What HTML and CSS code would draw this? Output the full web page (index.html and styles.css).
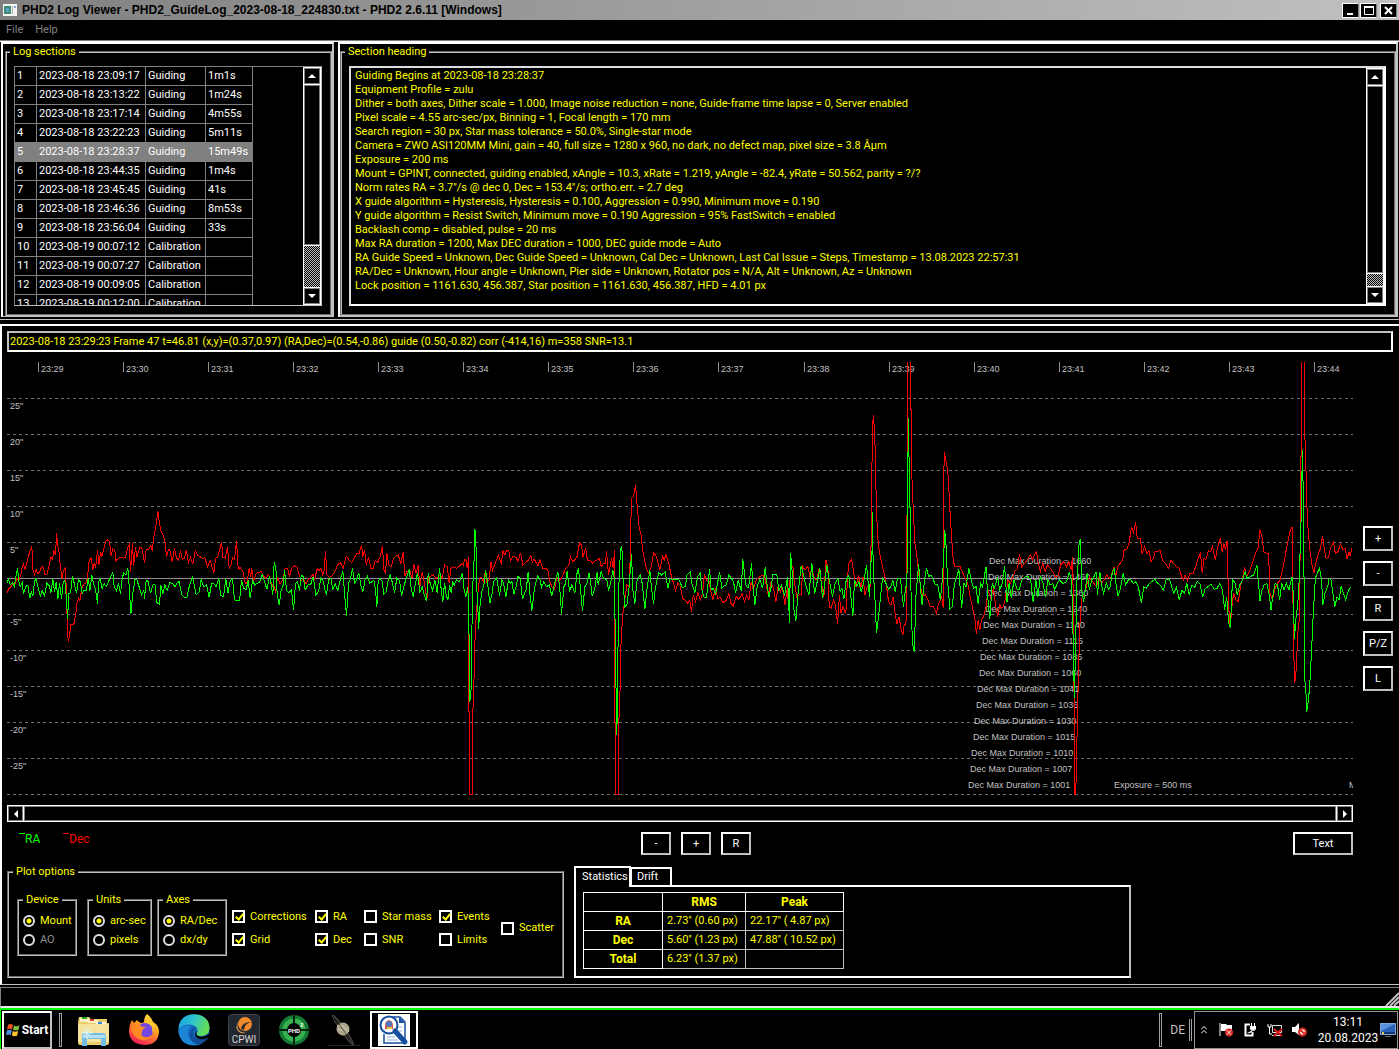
FILE: index.html
```html
<!DOCTYPE html>
<html lang="en">
<head>
<meta charset="utf-8">
<title>PHD2 Log Viewer</title>
<link rel="stylesheet" href="styles.css">
</head>
<body>
<header class="titlebar">
  <svg class="app-icon" width="14" height="12" viewBox="0 0 14 12"><rect width="14" height="12" fill="#f4f4f4"/><rect x="1" y="2" width="7" height="8" fill="#3c8c78"/><rect x="3" y="4" width="3" height="4" fill="#5aa0c8"/><rect x="9" y="2" width="1" height="8" fill="#b0b0b0"/><rect x="11" y="2" width="2" height="2" fill="#88a8d0"/></svg>
  <h1>PHD2 Log Viewer - PHD2_GuideLog_2023-08-18_224830.txt - PHD2 2.6.11 [Windows]</h1>
  <div class="window-buttons">
    <button aria-label="Minimize"><svg width="12" height="11"><rect x="2" y="8" width="6" height="2" fill="#fff"/></svg></button>
    <button aria-label="Maximize"><svg width="12" height="11"><path d="M1.500 2V9.500H10.500V2" fill="none" stroke="#fff"/><rect x="1" y="1" width="10" height="2" fill="#fff"/></svg></button>
    <button class="close" aria-label="Close"><svg width="12" height="11"><path d="M2 2L9 9M9 2L2 9" stroke="#fff" stroke-width="2"/></svg></button>
  </div>
</header>
<nav class="menubar"><button>File</button><button>Help</button></nav>

<section class="panes">
  <div class="pane pane-log">
    <fieldset class="group">
      <legend>Log sections</legend>
      <div class="listbox">
        <table class="log">
          <tbody>
            <tr><td>1</td><td>2023-08-18 23:09:17</td><td>Guiding</td><td>1m1s</td></tr>
            <tr><td>2</td><td>2023-08-18 23:13:22</td><td>Guiding</td><td>1m24s</td></tr>
            <tr><td>3</td><td>2023-08-18 23:17:14</td><td>Guiding</td><td>4m55s</td></tr>
            <tr><td>4</td><td>2023-08-18 23:22:23</td><td>Guiding</td><td>5m11s</td></tr>
            <tr class="selected"><td>5</td><td>2023-08-18 23:28:37</td><td>Guiding</td><td>15m49s</td></tr>
            <tr><td>6</td><td>2023-08-18 23:44:35</td><td>Guiding</td><td>1m4s</td></tr>
            <tr><td>7</td><td>2023-08-18 23:45:45</td><td>Guiding</td><td>41s</td></tr>
            <tr><td>8</td><td>2023-08-18 23:46:36</td><td>Guiding</td><td>8m53s</td></tr>
            <tr><td>9</td><td>2023-08-18 23:56:04</td><td>Guiding</td><td>33s</td></tr>
            <tr><td>10</td><td>2023-08-19 00:07:12</td><td>Calibration</td><td></td></tr>
            <tr><td>11</td><td>2023-08-19 00:07:27</td><td>Calibration</td><td></td></tr>
            <tr><td>12</td><td>2023-08-19 00:09:05</td><td>Calibration</td><td></td></tr>
            <tr><td>13</td><td>2023-08-19 00:12:00</td><td>Calibration</td><td></td></tr>
          </tbody>
        </table>
        <div class="vscroll">
          <button aria-label="Scroll up"><svg width="8" height="4"><path d="M0 4L4 0L8 4Z" fill="#fff"/></svg></button>
          <div class="thumb thumb-log"></div><div class="track"></div>
          <button aria-label="Scroll down"><svg width="8" height="4"><path d="M0 0L4 4L8 0Z" fill="#fff"/></svg></button>
        </div>
      </div>
    </fieldset>
  </div>
  <div class="pane pane-heading">
    <fieldset class="group">
      <legend>Section heading</legend>
      <div class="textbox">
        <textarea readonly aria-label="Section heading">Guiding Begins at 2023-08-18 23:28:37
Equipment Profile = zulu
Dither = both axes, Dither scale = 1.000, Image noise reduction = none, Guide-frame time lapse = 0, Server enabled
Pixel scale = 4.55 arc-sec/px, Binning = 1, Focal length = 170 mm
Search region = 30 px, Star mass tolerance = 50.0%, Single-star mode
Camera = ZWO ASI120MM Mini, gain = 40, full size = 1280 x 960, no dark, no defect map, pixel size = 3.8 Âµm
Exposure = 200 ms
Mount = GPINT, connected, guiding enabled, xAngle = 10.3, xRate = 1.219, yAngle = -82.4, yRate = 50.562, parity = ?/?
Norm rates RA = 3.7"/s @ dec 0, Dec = 153.4"/s; ortho.err. = 2.7 deg
X guide algorithm = Hysteresis, Hysteresis = 0.100, Aggression = 0.990, Minimum move = 0.190
Y guide algorithm = Resist Switch, Minimum move = 0.190 Aggression = 95% FastSwitch = enabled
Backlash comp = disabled, pulse = 20 ms
Max RA duration = 1200, Max DEC duration = 1000, DEC guide mode = Auto
RA Guide Speed = Unknown, Dec Guide Speed = Unknown, Cal Dec = Unknown, Last Cal Issue = Steps, Timestamp = 13.08.2023 22:57:31
RA/Dec = Unknown, Hour angle = Unknown, Pier side = Unknown, Rotator pos = N/A, Alt = Unknown, Az = Unknown
Lock position = 1161.630, 456.387, Star position = 1161.630, 456.387, HFD = 4.01 px</textarea>
        <div class="vscroll">
          <button aria-label="Scroll up"><svg width="8" height="4"><path d="M0 4L4 0L8 4Z" fill="#fff"/></svg></button>
          <div class="thumb thumb-heading"></div><div class="track"></div>
          <button aria-label="Scroll down"><svg width="8" height="4"><path d="M0 0L4 4L8 0Z" fill="#fff"/></svg></button>
        </div>
      </div>
    </fieldset>
  </div>
</section>

<main class="main">
  <input class="info" readonly aria-label="Frame information" value="2023-08-18 23:29:23 Frame 47 t=46.81 (x,y)=(0.37,0.97) (RA,Dec)=(0.54,-0.86) guide (0.50,-0.82) corr (-414,16) m=358 SNR=13.1">
  <div class="plot-area">
    <div class="plot-column">
      <svg class="chart" viewBox="7 362 1346 433">
        <path class="grid" d="M7 398.500H1353M7 434.500H1353M7 470.500H1353M7 506.500H1353M7 542.500H1353M7 614.500H1353M7 650.500H1353M7 686.500H1353M7 722.500H1353M7 758.500H1353M7 794.500H1353"/>
        <path class="axis" d="M7 578.500H1353"/>
        <path class="axis" d="M38.500 362V372M123.500 362V372M208.500 362V372M293.500 362V372M378.500 362V372M463.500 362V372M548.500 362V372M633.500 362V372M718.500 362V372M804.500 362V372M889.500 362V372M974.500 362V372M1059.500 362V372M1144.500 362V372M1229.500 362V372M1314.500 362V372"/>
        <g class="labels">
          <text x="41" y="372">23:29</text><text x="126" y="372">23:30</text><text x="211" y="372">23:31</text><text x="296" y="372">23:32</text><text x="381" y="372">23:33</text><text x="466" y="372">23:34</text><text x="551" y="372">23:35</text><text x="636" y="372">23:36</text><text x="721" y="372">23:37</text><text x="807" y="372">23:38</text><text x="892" y="372">23:39</text><text x="977" y="372">23:40</text><text x="1062" y="372">23:41</text><text x="1147" y="372">23:42</text><text x="1232" y="372">23:43</text><text x="1317" y="372">23:44</text>
          <text x="10" y="409">25"</text><text x="10" y="445">20"</text><text x="10" y="481">15"</text><text x="10" y="517">10"</text><text x="10" y="553">5"</text><text x="10" y="625">-5"</text><text x="10" y="661">-10"</text><text x="10" y="697">-15"</text><text x="10" y="733">-20"</text><text x="10" y="769">-25"</text>
          <text x="989" y="564">Dec Max Duration = 1660</text><text x="988" y="580">Dec Max Duration = 1460</text><text x="986" y="596">Dec Max Duration = 1360</text><text x="985" y="612">Dec Max Duration = 1240</text><text x="983" y="628">Dec Max Duration = 1140</text><text x="982" y="644">Dec Max Duration = 1115</text><text x="980" y="660">Dec Max Duration = 1085</text><text x="979" y="676">Dec Max Duration = 1060</text><text x="977" y="692">Dec Max Duration = 1041</text><text x="976" y="708">Dec Max Duration = 1035</text><text x="974" y="724">Dec Max Duration = 1030</text><text x="973" y="740">Dec Max Duration = 1015</text><text x="971" y="756">Dec Max Duration = 1010</text><text x="970" y="772">Dec Max Duration = 1007</text><text x="968" y="788">Dec Max Duration = 1001</text><text x="1114" y="788">Exposure = 500 ms</text><text x="1349" y="788">M</text>
        </g>
        <g class="traces" transform="translate(.2 320) scale(.33333)">
          <polyline class="dec" points="20,818 26,806 32,800 38,790 44,793 50,775 56,782 62,765 66,740 70,733 75,748 82,718 90,692 95,680 98,750 103,763 108,750 113,762 118,755 125,740 130,742 134,765 140,765 147,735 152,712 157,718 161,693 166,705 169,640 172,672 177,700 181,745 186,778 189,755 195,745 198,800 201,900 204,965 208,945 212,915 217,915 222,910 227,880 231,845 235,835 239,842 245,805 250,793 257,790 262,770 267,720 273,715 278,750 282,730 286,745 292,690 296,735 301,695 305,708 310,690 316,665 322,660 328,664 333,708 338,686 344,692 347,722 355,715 362,712 370,715 376,712 382,685 387,675 391,755 397,668 400,738 406,682 410,712 418,684 425,684 433,728 438,690 446,688 452,675 456,692 461,650 467,620 473,573 477,605 482,632 488,645 494,660 499,710 504,690 509,690 516,725 523,685 528,712 535,722 541,690 546,718 553,715 558,690 565,727 571,712 578,733 585,692 592,706 600,710 607,716 614,713 622,740 630,722 636,742 641,760 646,715 652,712 658,692 664,665 668,712 675,714 682,680 687,745 693,735 697,712 703,718 709,662 714,748 720,742 728,755 735,790 740,790 747,744 751,770 755,745 760,785 768,760 775,758 783,755 790,768 797,775 805,765 812,785 818,800 822,800 826,818 832,770 840,792 848,780 855,745 862,745 868,770 874,745 883,738 890,740 897,765 903,782 910,778 917,792 924,778 932,772 938,762 943,780 951,745 956,752 962,745 968,765 972,750 976,693 980,765 988,772 995,768 1004,755 1012,735 1021,727 1029,745 1038,708 1047,720 1055,728 1063,712 1070,700 1077,700 1084,675 1088,710 1093,690 1098,735 1105,712 1112,745 1119,745 1125,720 1132,728 1140,710 1147,678 1151,750 1156,760 1160,700 1166,735 1173,740 1180,715 1187,708 1194,705 1202,730 1209,695 1214,768 1220,755 1228,750 1236,775 1241,732 1248,760 1254,735 1259,800 1266,755 1273,790 1280,840 1285,770 1293,768 1300,765 1307,775 1314,772 1319,765 1326,775 1333,735 1341,740 1347,790 1352,745 1360,740 1368,745 1376,740 1384,732 1390,735 1393,718 1398,722 1401,745 1405,712"/>
          <polyline class="ra" points="20,790 25,778 30,795 36,788 42,800 48,765 52,745 56,785 60,800 66,788 70,822 76,800 83,795 89,835 93,815 98,828 103,785 107,775 113,800 120,828 126,812 133,828 140,790 146,795 152,818 158,778 163,815 168,785 173,838 178,788 184,838 189,785 194,780 199,840 202,898 206,820 211,818 217,768 222,790 229,820 235,780 240,785 246,820 252,810 258,812 264,775 269,812 275,765 280,790 286,810 292,852 295,785 300,778 306,805 312,790 318,800 325,785 331,770 338,757 342,800 349,812 355,790 361,822 366,775 371,758 377,765 383,745 387,800 392,882 398,820 404,780 410,780 416,798 424,825 431,810 433,836 438,780 444,785 451,820 458,795 464,792 470,848 478,852 482,795 488,822 494,795 501,812 509,788 517,790 524,800 531,788 537,785 545,825 552,832 560,832 567,800 577,768 583,800 588,825 597,815 603,778 610,800 619,795 627,832 634,790 640,790 648,800 656,775 661,825 670,830 677,776 683,820 690,782 697,778 703,840 711,842 718,842 724,780 730,805 738,808 744,780 750,835 757,778 763,795 770,790 778,788 786,765 793,785 800,808 808,768 814,800 818,825 822,725 827,745 831,825 837,855 843,810 849,795 853,750 859,812 866,818 874,810 880,870 886,790 892,785 898,812 903,765 909,770 915,810 923,795 931,795 939,770 947,825 955,815 962,775 968,780 974,808 979,825 985,780 992,775 998,808 1005,792 1013,812 1020,780 1028,752 1033,820 1039,888 1045,790 1051,775 1057,745 1063,790 1069,780 1076,758 1083,800 1088,815 1095,778 1102,768 1108,790 1115,785 1121,782 1126,808 1130,862 1134,782 1140,775 1146,785 1151,822 1158,815 1163,785 1170,765 1177,790 1183,818 1190,775 1198,782 1204,828 1211,800 1218,775 1227,748 1233,805 1239,830 1246,790 1252,758 1259,818 1266,800 1272,825 1279,843 1284,760 1290,790 1297,812 1304,780 1311,818 1318,745 1321,775"/>
        </g>
        <g class="traces" transform="translate(440.2 350) scale(.33333)">
          <polyline class="dec" points="85,622 85,1085 88,1085 88,1333 97,1333 97,1115 101,1005 104,880 108,800 113,730 118,685 124,682 130,695 135,665 140,697 147,690 152,635 157,662 165,640 175,615 184,645 187,602 194,615 198,603 206,602 211,632 218,620 228,622 233,635 241,608 248,645 256,637 264,632 272,617 276,637 282,627 293,648 299,630 308,655 316,655 323,660 329,695 335,710 343,718 350,680 358,690 367,680 376,655 386,645 391,620 398,635 410,622 418,578 424,585 428,622 436,595 442,632 450,630 457,640 466,632 478,625 483,650 490,640 496,640 499,602 505,675 514,625 519,655 523,600 523,1118 526,1118 526,1333 535,1333 536,1115 540,1010 542,890 547,800 555,740 560,705 568,710 572,510 575,445 580,440 586,405 592,480 597,535 602,550 607,598 612,625 618,655 625,670 632,655 640,608 646,615 652,632 659,660 667,620 672,630 677,615 686,640 692,672 700,700 706,722 713,698 720,710 728,745 736,752 742,760 749,752 754,787 759,735 766,755 773,728 780,750 787,730 793,672 799,692 806,690 811,722 818,747 826,715 833,745 840,742 848,757 858,752 866,730 872,760 879,768 888,740 896,748 906,732 913,755 919,735 926,750 933,695 939,720 948,690 956,682 968,675 975,690 985,738 992,698 1000,715 1007,755 1014,708 1021,725 1026,710 1034,765 1041,715 1045,765 1052,645 1058,650 1063,700 1070,740 1076,735 1083,735 1088,650 1094,660 1103,650 1108,675 1115,655 1122,685 1130,690 1137,655 1144,700 1151,742 1157,630 1163,650 1167,770 1173,775 1180,750 1186,765 1192,822 1198,735 1202,790 1208,770 1217,790 1222,680 1226,640 1234,627 1240,665 1247,710 1255,675 1262,712 1269,680 1274,735 1281,710 1290,710 1292,590 1295,590 1295,357 1298,215 1300,195 1304,265 1309,490 1314,580 1320,620 1327,650 1334,680 1340,715 1345,755 1352,765 1359,740 1365,795 1370,822 1377,800 1382,835 1388,855 1392,825 1396,825 1399,800 1399,495"/>
          <polyline class="ra" points="0,680 3,720 8,755 13,698 18,735 23,750 28,705 33,728 38,695 42,705 49,690 58,695 67,668 71,715 77,740 83,710 87,875 89,1055 94,1005 95,860 97,700 100,685 104,538 107,560 109,700 113,770 115,838 120,760 125,725 131,705 136,660 141,690 149,760 156,730 160,695 169,683 174,710 178,737 185,690 190,698 197,740 205,690 210,700 215,695 221,732 228,710 233,680 240,685 247,748 253,730 258,720 264,665 269,730 275,782 281,730 286,700 293,678 300,690 304,712 311,695 318,710 327,705 335,738 343,700 353,665 359,720 364,792 371,710 376,700 381,662 388,725 395,705 404,730 410,672 415,655 421,720 427,783 434,710 440,700 447,668 452,705 456,738 464,715 471,665 474,705 483,665 490,685 500,690 505,722 511,700 518,660 523,690 526,935 530,1155 533,940 535,730 541,595 545,590 549,700 554,770 560,765 566,720 571,650 574,612 578,720 584,762 590,695 600,675 606,700 614,778 620,720 629,660 634,715 640,762 646,710 656,668 664,675 675,665 683,715 690,685 698,690 707,690 716,688 726,712 736,710 740,675 750,665 756,705 764,728 772,680 780,670 786,725 792,742 799,742 808,658 813,720 820,715 826,735 832,700 838,665 845,715 852,708 858,705 866,675 873,685 880,695 886,730 894,690 903,722 908,628 914,680 918,710 925,712 934,640 938,700 944,765 951,710 959,688 967,715 975,652 980,700 986,742 993,710 998,675 1010,675 1016,720 1024,705 1033,738 1042,680 1048,818 1051,610 1055,650 1060,770 1067,812 1073,735 1083,648 1090,675 1095,700 1106,735 1115,640 1123,732 1130,700 1139,655 1147,745 1152,715 1160,645 1166,685 1177,740 1185,700 1193,685 1200,725 1205,715 1211,748 1218,690 1226,675 1232,740 1238,798 1243,690 1250,710 1256,695 1263,725 1270,700 1279,645 1284,700 1288,742 1292,635 1295,635 1297,485 1299,660 1304,740 1309,850 1315,800 1321,740 1327,685 1335,695 1345,718 1352,710 1358,690 1365,725 1372,685 1381,685 1385,730 1390,770 1396,715 1400,700 1402,560"/>
        </g>
        <g class="traces" transform="translate(860.2 350) scale(.34377 .33333)">
          <polyline class="dec" points="135,495 138,495 138,36 147,36 147,180 149,180 150,370 154,470 159,580 164,610 170,670 176,715 182,738 190,735 197,750 204,770 213,770 222,790 227,765 231,755 237,740 242,775 244,305 247,320 252,345 256,380 261,480 266,565 271,635 276,650 283,650 290,648 298,668 305,685 313,700 320,740 327,775 333,800 338,852 343,810 348,840 353,810 359,800 366,770 372,720 380,745 388,715 394,770 400,800 406,765 411,775 417,770 422,745 430,690 437,700 444,680 451,662 458,655 463,612 470,650 478,640 486,630 495,615 502,630 507,615 513,605 518,640 524,665 531,640 538,665 545,645 553,655 560,665 567,680 575,680 583,645 592,635 600,650 607,635 614,660 617,622 619,700 621,870 624,1333 627,1333 629,1245 632,1100 635,960 640,800 645,745 652,735 660,700 667,680 672,690 680,700 687,710 694,685 702,700 709,690 717,675 724,685 730,680 738,650 743,680 749,650 756,640 763,630 768,598 775,600 782,580 789,530 795,548 801,515 806,565 815,565 820,612 827,590 834,612 840,602 846,635 853,625 858,605 866,605 872,600 880,632 888,640 897,655 904,630 911,640 920,650 928,655 935,680 940,690 945,675 952,692 959,670 968,672 976,650 983,625 990,610 995,670 1000,625 1006,628 1013,602 1020,605 1025,590 1033,630 1039,595 1047,565 1053,605 1058,580 1063,600 1067,572 1070,690 1073,790 1076,835 1083,750 1087,730 1093,750 1100,755 1107,705 1112,690 1118,650 1123,680 1132,665 1140,640 1150,610 1157,595 1163,540 1168,555 1174,605 1182,610 1188,610 1192,730 1199,748 1206,720 1213,700 1222,690 1229,655 1236,620 1243,580 1250,545 1257,530 1260,870 1264,1000 1268,960 1273,850 1278,800 1282,320 1285,320 1285,36 1291,36 1292,250 1295,280 1299,460 1303,540 1308,600 1314,645 1320,670 1325,640 1333,610 1339,595 1345,558 1349,590 1355,625 1362,622 1368,595 1377,575 1382,610 1390,605 1397,582 1404,598 1411,595 1416,628 1422,605 1425,618 1430,595"/>
          <polyline class="ra" points="138,560 138,440 140,205 142,320 144,475 146,470 147,685 150,830 154,895 158,905 161,750 166,690 170,643 175,710 180,765 187,690 193,655 199,680 206,675 213,690 219,705 226,705 233,750 239,690 243,612 246,540 250,590 254,690 261,778 268,770 274,700 280,685 287,658 295,775 302,700 308,710 316,655 323,690 330,715 337,710 343,762 350,700 356,710 366,650 371,740 377,808 384,700 390,715 400,685 406,720 413,700 420,648 427,755 433,700 440,745 447,690 457,720 463,720 470,690 480,680 487,678 496,690 503,755 511,690 517,740 524,680 532,700 539,742 546,690 553,705 560,700 566,720 573,700 580,690 590,700 600,695 608,668 615,690 618,800 623,1045 627,870 630,700 634,640 637,575 641,570 644,720 650,755 655,720 660,670 667,720 673,690 680,680 686,665 690,735 697,665 702,705 708,730 716,700 722,718 727,710 733,670 739,655 744,700 750,738 757,715 765,670 772,705 780,690 787,690 795,700 802,695 809,710 818,760 825,710 832,715 840,702 848,695 857,688 865,700 873,705 882,720 890,688 900,688 906,710 912,730 920,712 928,750 936,720 943,730 950,700 957,735 965,705 973,712 980,695 988,700 996,742 1004,715 1012,710 1020,702 1030,718 1038,715 1046,700 1054,720 1060,780 1066,740 1072,820 1077,835 1079,780 1083,690 1090,698 1097,735 1104,705 1112,690 1120,665 1125,685 1135,680 1144,675 1150,660 1154,645 1159,705 1163,752 1169,720 1175,705 1183,700 1190,735 1195,780 1200,740 1207,700 1214,705 1220,750 1226,700 1233,720 1240,700 1247,720 1256,680 1260,735 1263,868 1268,800 1273,760 1277,690 1284,460 1286,300 1288,380 1291,680 1293,990 1296,1010 1299,1085 1304,1050 1308,1000 1313,900 1318,790 1324,685 1330,668 1336,655 1342,690 1346,765 1352,730 1360,710 1364,685 1370,690 1375,730 1381,770 1387,740 1393,750 1399,708 1406,730 1412,750 1420,722 1427,710"/>
        </g>
      </svg>
      <div class="hscroll">
        <button aria-label="Scroll left"><svg width="4" height="8"><path d="M4 0L0 4L4 8Z" fill="#fff"/></svg></button>
        <div class="hthumb"></div>
        <button aria-label="Scroll right"><svg width="4" height="8"><path d="M0 0L4 4L0 8Z" fill="#fff"/></svg></button>
      </div>
      <div class="controls">
        <div class="keys">
          <span class="key key-ra"><i></i>RA</span>
          <span class="key key-dec"><i></i>Dec</span>
        </div>
        <div class="zoom"><button class="btn">-</button><button class="btn">+</button><button class="btn">R</button></div>
        <button class="btn">Text</button>
      </div>
    </div>
    <div class="side"><button class="btn">+</button><button class="btn">-</button><button class="btn">R</button><button class="btn">P/Z</button><button class="btn">L</button></div>
  </div>

  <div class="bottom">
    <fieldset class="group options">
      <legend>Plot options</legend>
      <div class="options-row">
        <fieldset class="group radios device"><legend>Device</legend>
          <label><input type="radio" name="device" checked>Mount</label>
          <label class="off"><input type="radio" name="device" disabled>AO</label>
        </fieldset>
        <fieldset class="group radios units"><legend>Units</legend>
          <label><input type="radio" name="units" checked>arc-sec</label>
          <label><input type="radio" name="units">pixels</label>
        </fieldset>
        <fieldset class="group radios axes"><legend>Axes</legend>
          <label><input type="radio" name="axes" checked>RA/Dec</label>
          <label><input type="radio" name="axes">dx/dy</label>
        </fieldset>
        <div class="checks">
          <label><input type="checkbox" checked>Corrections</label>
          <label><input type="checkbox" checked>RA</label>
          <label><input type="checkbox">Star mass</label>
          <label><input type="checkbox" checked>Events</label>
          <label class="scatter"><input type="checkbox">Scatter</label>
          <label><input type="checkbox" checked>Grid</label>
          <label><input type="checkbox" checked>Dec</label>
          <label><input type="checkbox">SNR</label>
          <label><input type="checkbox">Limits</label>
        </div>
      </div>
    </fieldset>
    <div class="tabs">
      <div class="tablist" role="tablist">
        <button class="tab active" role="tab" aria-selected="true">Statistics</button>
        <button class="tab" role="tab" aria-selected="false">Drift</button>
      </div>
      <div class="tabpanel" role="tabpanel">
        <table class="stats">
          <thead><tr><th></th><th>RMS</th><th>Peak</th></tr></thead>
          <tbody>
            <tr><th>RA</th><td>2.73'' (0.60 px)</td><td>22.17'' ( 4.87 px)</td></tr>
            <tr><th>Dec</th><td>5.60'' (1.23 px)</td><td>47.88'' ( 10.52 px)</td></tr>
            <tr><th>Total</th><td>6.23'' (1.37 px)</td><td></td></tr>
          </tbody>
        </table>
      </div>
    </div>
  </div>
</main>

<div class="statusbar"><svg width="14" height="14"><path d="M1 14L14 1M5 14L14 5M9 14L14 9" stroke="#c0c0c0" stroke-width="2"/></svg></div>

<footer class="taskbar">
  <button class="start">
    <svg width="14" height="14" viewBox="0 0 14 14"><path d="M2 2Q4 0 7 2L6 6.500Q4 5 1 6.500Z" fill="#f0552a"/><path d="M8 2.500Q10 4 13.500 2.500L12.500 7Q10 8 7 6.800Z" fill="#7cbf3a"/><path d="M.8 7.500Q3 6 5.800 7.500L4.800 12Q3 11 0 12Z" fill="#4a90e0"/><path d="M6.800 8Q9 9.500 12.200 8L11.200 12.500Q9 14 5.800 12.500Z" fill="#fbc42d"/></svg>
    Start
  </button>
  <span class="sep"></span>
  <div class="apps">
    <button aria-label="Explorer"><svg width="32" height="32" viewBox="0 0 32 32"><path d="M1 3H11L13 5H29V9H31V29Q31 31 29 31H2Q0 31 0 29V8Z" fill="#e8cb6c"/><path d="M2 4H11V8H2Z" fill="#fff2c0"/><rect x="4" y="3" width="5" height="2" fill="#1ea81e"/><path d="M10 6H20V9H10Z" fill="#fff2c0"/><rect x="12" y="5" width="4" height="2" fill="#d8402a"/><path d="M18 8H28V11H18Z" fill="#fff6d8"/><rect x="20" y="8" width="4" height="2" fill="#2a8ad8"/><path d="M0 10H31V28H0Z" fill="#f6e39c"/><path d="M4 22Q4 19 7 19H25Q28 19 28 22V32H23V25H9V32H4Z" fill="#72bde6"/><path d="M5 21H27V24H5Z" fill="#b4def4"/><path d="M9 13V25M3 19H15M5 15L13 23M13 15L5 23" stroke="#dff4ff"/></svg></button>
    <button aria-label="Firefox"><svg width="32" height="32" viewBox="0 0 32 32"><defs><linearGradient id="fx" x1=".8" y1="0" x2=".3" y2="1"><stop offset="0" stop-color="#fff044"/><stop offset=".45" stop-color="#ff9a1f"/><stop offset="1" stop-color="#f01a5c"/></linearGradient></defs><path d="M19 0Q24 4 25 8Q31 11 31 18Q30 31 16 31Q2 30 1 18Q1 11 4 6L6 9L9 6Q10 8 13 9Q15 9 16 8Q16 3 19 0Z" fill="url(#fx)"/><circle cx="17" cy="17" r="8" fill="#7548e2"/><path d="M3 14Q8 10 12 11Q14 14 19 13Q14 15 14 18Q12 21 16 23Q22 24 26 19Q22 27 14 26Q5 24 3 14Z" fill="#ff8a24"/><path d="M19 9Q26 11 24 19Q28 14 25 8L20 3Q17 6 19 9Z" fill="#ffc82c"/></svg></button>
    <button aria-label="Edge"><svg width="32" height="32" viewBox="0 0 32 32"><defs><linearGradient id="ed" x1="0" y1="0" x2="1" y2=".3"><stop offset="0" stop-color="#1f9de0"/><stop offset=".5" stop-color="#2cc4cf"/><stop offset="1" stop-color="#63dc58"/></linearGradient></defs><circle cx="16" cy="16" r="15.500" fill="#1268bd"/><path d="M.5 15Q1 1 16 .3Q31 1 31.600 14Q31 22 23 22Q17 22 19 18Q21 15 17 12Q8 8 .5 15Z" fill="url(#ed)"/><path d="M.5 16Q6 10 13 12Q8 18 11 24Q14 29 21 30Q7 34 2 23Q0 19 .5 16Z" fill="#1b86d6"/><path d="M18 14Q14 17 15 21Q19 27 29 23Q32 23 28 26Q23 31 18 30Q10 26 12 18Q14 13 18 14Z" fill="#114f98"/><path d="M19.500 16Q17 20 20 22Q25 24 31 20V23Q25 27 19 24Q15 20 19.500 16Z" fill="#000"/></svg></button>
    <button aria-label="CPWI"><svg width="32" height="32" viewBox="0 0 32 32"><rect x=".5" y=".5" width="31" height="31" rx="3" fill="#23272f" stroke="#3d444e"/><circle cx="17" cy="10" r="7" fill="#ef8a2c"/><path d="M13 15Q14 8 23 8Q16 10 16 16Z" fill="#23272f"/><path d="M10 8Q7 18 18 19Q13 20 10 17Q7 13 10 8Z" fill="#f6a858"/><text x="16" y="29" text-anchor="middle" class="cpwi">CPWI</text></svg></button>
    <button aria-label="PHD2"><svg width="32" height="32" viewBox="0 0 32 32"><circle cx="16" cy="16" r="15" fill="#157a35"/><circle cx="16" cy="16" r="11.500" fill="#36b34f"/><path d="M16 0V32M0 16H32" stroke="#05200c" stroke-width="2"/><circle cx="16" cy="16" r="7" fill="#000"/><text x="16" y="19" text-anchor="middle" class="phd">PHD</text><text x="22" y="13" class="phd">2</text></svg></button>
    <button aria-label="Saturn"><svg width="32" height="32" viewBox="0 0 32 32"><path d="M0 31.500H32" stroke="#222"/><ellipse cx="15" cy="16" rx="18" ry="2" transform="rotate(55 15 16)" fill="none" stroke="#4c4a44"/><circle cx="15" cy="15" r="6.500" fill="#aaa58c"/><path d="M9 12Q15 10 21 18M9 16Q13 14 18 20" stroke="#d5cfb4" fill="none"/><path d="M6 2Q14 15 25 30" stroke="#4c483e" stroke-width="1" fill="none"/></svg></button>
    <button class="running" aria-label="PHD2 Log Viewer"><svg width="32" height="32" viewBox="0 0 32 32"><rect width="32" height="32" fill="#fff"/><path d="M9 3H22L27 8V29H6V20" fill="#fff" stroke="#164f9f" stroke-width="1.500"/><path d="M21 3V9H27Z" fill="#164f9f"/><path d="M19 13H24M19 17H24M9 23H17M9 26H20" stroke="#8ab0dc"/><circle cx="11" cy="11" r="8.500" fill="#fff" stroke="#164f9f" stroke-width="2"/><path d="M7 15Q6 7 11 6Q16 7 15 15Z" fill="#d9564d"/><circle cx="11" cy="10" r="3" fill="#4c77c2"/><path d="M9 14H14" stroke="#f1c34a" stroke-width="2"/><path d="M17 17L27 28" stroke="#164f9f" stroke-width="5" stroke-linecap="round"/></svg></button>
  </div>
  <span class="sep"></span>
  <span class="lang">DE</span>
  <span class="sep sep-short"></span>
  <div class="tray">
    <svg width="6" height="8" class="chev"><path d="M0 3.500L3 .5L6 3.500M0 7.500L3 4.500L6 7.500" fill="none" stroke="#fff"/></svg>
    <svg width="15" height="15" class="ic"><path d="M1 1V14" stroke="#fff"/><path d="M2 2H7L8 3H13V9H2Z" fill="#fff"/><circle cx="10" cy="10.500" r="4" fill="#d82a20"/><path d="M8 8.500L12 12.500M12 8.500L8 12.500" stroke="#fff"/></svg>
    <svg width="15" height="15" class="ic"><path d="M7 2.500H2.500V13.500H9.500V10" fill="none" stroke="#fff" stroke-width="2"/><path d="M7 4H13V7Q12 9 10 9Q8 9 7 7ZM4 11Q8 12 10 8" fill="#fff"/><path d="M8.500 1V4M11.500 1V4" stroke="#fff"/></svg>
    <svg width="16" height="15" class="ic"><path d="M5.500 3.500H14.500V10.500H5.500Z M5 13.500H14" fill="none" stroke="#ddd"/><path d="M1 2V5H4V2M2.500 5V12H5" fill="none" stroke="#fff"/><path d="M7 7L15 14M15 7L7 14" stroke="#e01818" stroke-width="2"/></svg>
    <svg width="15" height="15" class="ic"><path d="M0 5H3L7 1V13L3 10H0Z" fill="#fff"/><circle cx="10.500" cy="10" r="3.500" fill="#fff" stroke="#d82a20" stroke-width="2"/><path d="M8 8L13 12" stroke="#d82a20" stroke-width="2"/></svg>
    <time class="clock">13:11<br>20.08.2023</time>
    <svg width="16" height="14"><rect x=".5" y=".5" width="15" height="11" fill="#2b62ba" stroke="#7fa6d8"/><path d="M1 1H15L1 8Z" fill="#5c92dc"/><rect x="1" y="9" width="14" height="2" fill="#16356e"/><rect x="2" y="9" width="2" height="2" fill="#e8c23a"/><path d="M5 13.500H11" stroke="#667"/></svg>
  </div>
</footer>
</body>
</html>
```
FILE: styles.css
```css
* { box-sizing: border-box; }
body {
  margin: 0;
  min-height: 100vh;
  display: flex;
  flex-direction: column;
  background: #000;
  color: #ff0;
  font: 11px/14px Roboto, "Liberation Sans", Arial, sans-serif;
}
button, input, textarea { font: inherit; color: inherit; }
button { background: #000; border: 0; padding: 0; display: flex; align-items: center; justify-content: center; color: #fff; }
svg { display: block; flex: none; }

.titlebar { display: flex; align-items: center; height: 20px; padding: 0 2px 0 3px; background: linear-gradient(90deg, #808080, #c0c0c0); }
.titlebar h1 { margin: 0 0 0 5px; font-family: "Liberation Sans", Arial, sans-serif; font-size: 12px; line-height: 20px; font-weight: bold; color: #000; flex: 1; }
.window-buttons { display: flex; gap: 1px; }
.window-buttons button { width: 17px; height: 15px; border: 1px solid #fff; border-right-color: #808080; border-bottom-color: #fff; }
.window-buttons .close { margin-left: 2px; }
.menubar { display: flex; gap: 12px; height: 20px; padding: 0 6px; }
.menubar button { color: #808080; }

.panes { display: flex; gap: 4px; padding: 1px 1px 2px; border-top: 1px solid #808080; border-bottom: 1px solid #c0c0c0; box-shadow: inset 0 1px #fff; }
.pane { padding: 1px 0 0 2px; border: 1px solid #c0c0c0; border-width: 2px 2px 1px; border-top-color: #fff; border-left-color: #fff; }
.pane-log { flex: 0 0 333px; }
.pane-heading { flex: 1; padding-left: 0; }
.group { min-width: 0; margin: 0; border: 2px groove #c0c0c0; padding: 7px 8px 8px 7px; }
.group legend { padding: 0 3px; margin-left: -4px; height: 14px; }
.listbox, .textbox { display: flex; height: 240px; overflow: hidden; border: 1px solid #c0c0c0; border-top-color: #808080; border-left-color: #808080; }
.textbox { border: 2px solid #fff; border-top-color: #ddd; border-left-color: #ddd; }
.listbox { justify-content: space-between; align-items: flex-start; }
.log { border-collapse: separate; border-spacing: 0; table-layout: fixed; width: 238px; color: #fff; }
.log td { height: 19px; line-height: 14px; padding: 0 0 0 2px; border-right: 1px solid #808080; border-bottom: 1px solid #808080; }
.log td:nth-child(1) { width: 22px; }
.log td:nth-child(2) { width: 109px; }
.log td:nth-child(3) { width: 60px; }
.log .selected { background: #808080; }
.vscroll { display: flex; flex-direction: column; flex: 0 0 18px; width: 18px; align-self: stretch; background: #fff; padding: 1px; gap: 1px; }
.vscroll button { flex: 0 0 16px; border: 1px solid #808080; }
.thumb { background: #000; border: 1px solid #808080; }
.thumb-log { flex: 162 0 0; }
.thumb-log + .track { flex: 42 0 0; }
.thumb-heading { flex: 191 0 0; }
.thumb-heading + .track { flex: 12 0 0; }
.track { background: repeating-conic-gradient(#000 0 25%, #c0c0c0 0 50%) 0 0 / 2px 2px; }
.textbox textarea { flex: 1; resize: none; border: 0; padding: 1px 4px; margin: 0; background: #000; overflow: hidden; outline: 0; white-space: pre; }

.main { margin: 4px 0 2px; padding: 5px 6px 6px 5px; border: 2px solid #fff; border-width: 2px 0 1px 2px; border-bottom-color: #c0c0c0; }
.info { display: block; width: 100%; height: 21px; padding: 0 1px; background: #000; border: 2px solid #fff; border-top-color: #c0c0c0; border-left-color: #c0c0c0; outline: 0; }
.plot-area { display: flex; gap: 10px; margin-top: 10px; }
.plot-column { flex: 1; min-width: 0; display: flex; flex-direction: column; gap: 10px; }
.chart { width: 100%; height: auto; overflow: hidden; }
.grid { stroke: #707070; stroke-dasharray: 3 3; fill: none; shape-rendering: crispEdges; }
.axis { stroke: #909090; fill: none; shape-rendering: crispEdges; }
.labels { fill: #c0c0c0; font-family: "Liberation Sans", Arial, sans-serif; font-size: 9px; }
.traces polyline { fill: none; stroke-width: 1; vector-effect: non-scaling-stroke; shape-rendering: crispEdges; }
.dec { stroke: #f00; }
.ra { stroke: #0f0; }
.hscroll { display: flex; height: 17px; background: #fff; padding: 1px; gap: 1px; }
.hscroll button { width: 15px; border: 1px solid #808080; }
.hthumb { flex: 1; background: #000; border: 1px solid #808080; }
.controls { display: grid; grid-template-columns: 92px 1fr 60px; }
.keys { display: flex; padding: 0 0 0 12px; font-size: 12px; }
.key { display: flex; flex: 0 0 44px; height: 14px; }
.key i { width: 6px; height: 1px; margin-top: 1px; background: currentColor; }
.key-ra { color: #0f0; }
.key-dec { color: #f00; }
.zoom { display: flex; justify-content: center; gap: 10px; }
.btn { border: 2px solid #fff; border-right-color: #c0c0c0; border-bottom-color: #c0c0c0; height: 23px; }
.zoom .btn { width: 30px; }
.side { flex: 0 0 30px; display: flex; flex-direction: column; justify-content: center; gap: 10px; }
.side .btn { height: 25px; }

.bottom { display: flex; gap: 10px; margin-top: 10px; height: 113px; }
.options { flex: 0 0 557px; padding: 14px 8px 8px; }
.options-row { display: flex; }
.radios { flex: none; height: 63px; padding: 4px 4px 0; }
.radios legend { margin-left: 0; }
.device { width: 60px; margin-right: 10px; }
.units { width: 65px; margin-right: 5px; }
.axes { width: 70px; margin-right: 5px; }
.radios label { display: flex; align-items: center; gap: 5px; height: 19px; white-space: nowrap; }
.off { color: #909090; }
input[type="radio"] { appearance: none; flex: none; width: 12px; height: 12px; margin: 0; border: 2px solid #e0e0e0; border-radius: 50%; background: #000; }
input[type="radio"]:checked { background: radial-gradient(circle, #ff0 2px, #000 3px); }
input[type="checkbox"] { appearance: none; flex: none; width: 13px; height: 13px; margin: 0; border: 2px solid #fff; background: #000; }
input[type="checkbox"]:checked { position: relative; }
input[type="checkbox"]:checked::after { content: ""; position: absolute; left: 3px; top: 0; width: 3px; height: 6px; border: solid #ff0; border-width: 0 2px 2px 0; transform: rotate(40deg); }
.checks { display: grid; grid-template-columns: 83px 49px 75px 62px 50px; grid-template-rows: 23px 23px; padding-top: 12px; align-self: flex-start; }
.checks label { display: flex; align-items: center; gap: 5px; white-space: nowrap; }
.scatter { grid-column: 5; grid-row: 1 / 3; }

.tabs { flex: 0 1 557px; display: flex; flex-direction: column; }
.tablist { display: flex; align-items: flex-end; height: 20px; }
.tab { height: 18px; width: 41px; padding: 0 0 0 5px; justify-content: flex-start; border: 2px solid #fff; border-bottom: 0; border-left-width: 1px; }
.tab.active { width: 57px; height: 21px; margin-bottom: -2px; padding: 0 0 2px 6px; border-left-width: 2px; position: relative; }
.tabpanel { flex: 1; padding: 5px 7px; border: 2px solid #fff; border-right-color: #c0c0c0; }
.stats { border-collapse: collapse; table-layout: fixed; width: 261px; }
.stats td, .stats th { height: 19px; padding: 0 0 0 4px; border: 1px solid #c0c0c0; text-align: left; white-space: nowrap; }
.stats th { text-align: center; padding: 0; font-size: 12px; border-color: #fff; }
.stats th:nth-child(1) { width: 79px; }
.stats th:nth-child(2) { width: 83px; }

.statusbar { display: flex; justify-content: flex-end; align-items: flex-end; height: 21px; border-top: 1px solid #808080; border-left: 1px solid #808080; border-bottom: 2px solid #e8e8e8; }
.taskbar { display: flex; align-items: center; flex: 1; min-height: 41px; padding: 0 1px; border-top: 2px solid #0f0; border-left: 1px solid #0f0; }
.start { width: 50px; height: 38px; gap: 2px; border: 2px solid #fff; border-right-color: #c0c0c0; border-bottom-color: #c0c0c0; font-weight: bold; font-size: 12px; }
.sep { width: 3px; height: 34px; border: 1px solid #a0a0a0; margin-left: 7px; }
.sep-short { height: 22px; margin-left: 4px; border-width: 0 1px; }
.apps { display: flex; flex: 1; align-items: center; gap: 2px; margin-left: 8px; }
.apps button { width: 48px; height: 38px; }
.apps .running { border: 2px solid #fff; }
.cpwi { font-size: 10px; fill: #d8d8d8; }
.phd { font-size: 6px; font-weight: bold; fill: #fff; }
.lang { margin-left: 8px; font-size: 12px; color: #c0c0c0; }
.tray { display: flex; align-items: center; height: 38px; width: 204px; margin-left: 2px; padding: 0 1px 0 6px; border: 1px solid #909090; }
.chev { margin-right: 12px; }
.ic { margin-right: 9px; }
.clock { flex: 1; text-align: center; color: #fff; font-size: 12px; line-height: 16px; }
```
